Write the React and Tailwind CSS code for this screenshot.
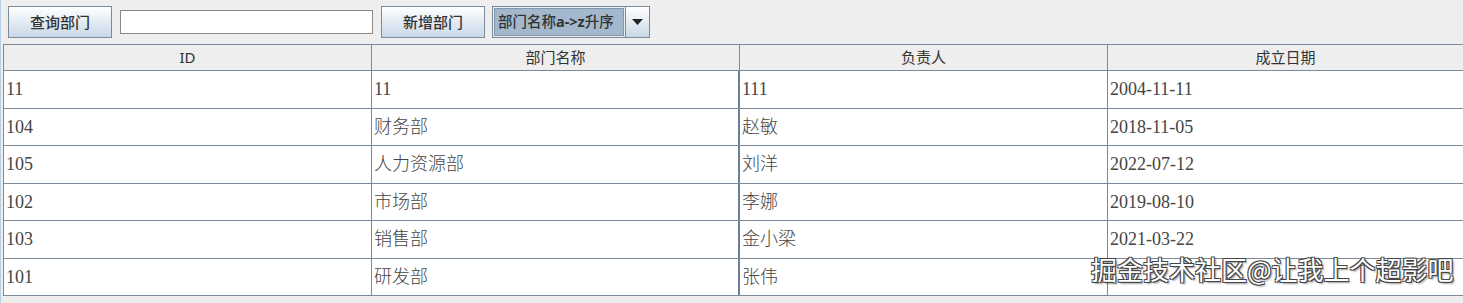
import React from "react";

const rows = [
  ["11", "11", "111", "2004-11-11"],
  ["104", "财务部", "赵敏", "2018-11-05"],
  ["105", "人力资源部", "刘洋", "2022-07-12"],
  ["102", "市场部", "李娜", "2019-08-10"],
  ["103", "销售部", "金小梁", "2021-03-22"],
  ["101", "研发部", "张伟", "2020-01-15"],
];

const heights = ["h-[38px]", "h-[37px]", "h-[38px]", "h-[37px]", "h-[38px]", "h-[37px]"];

const ui = { fontFamily: '"Noto Sans", "Noto Sans CJK SC", sans-serif' };
const cell = { fontFamily: '"Liberation Serif", "Noto Sans CJK SC", serif' };

function JButton({ children, className = "" }) {
  return (
    <button
      style={ui}
      className={`h-[32px] border border-[#7a8a99] bg-gradient-to-b from-[#ffffff] to-[#c8d8e8] text-[15px] font-medium text-[#333] ${className}`}
    >
      {children}
    </button>
  );
}

export default function App() {
  return (
    <div className="w-[1463px] h-[303px] bg-[#eeeeee] relative overflow-hidden border-l border-[#b8cfe5]">
      {/* toolbar */}
      <div className="flex items-center h-[44px] pl-[7px]">
        <JButton className="w-[104px]">查询部门</JButton>
        <input className="ml-[8px] w-[253px] h-[24px] bg-white border border-[#8a8a8a] outline-none" />
        <JButton className="ml-[8px] w-[104px]">新增部门</JButton>
        <div className="ml-[7px] w-[158px] h-[32px] flex border border-[#7a8a99] bg-[#eeeeee]">
          <div
            style={ui}
            className="m-[1px] w-[130px] bg-[#a3b8cc] border border-[#8197ad] text-[14.5px] font-medium text-[#333] flex items-center pl-[3px] whitespace-nowrap"
          >
            部门名称<span className="font-bold">a-&gt;z</span>升序
          </div>
          <div className="flex-1 border-l border-[#7a8a99] bg-gradient-to-b from-[#ffffff] to-[#c8d8e8] flex items-center justify-center">
            <svg width="11" height="6" viewBox="0 0 11 6">
              <path d="M0 0 L11 0 L5.5 6 Z" fill="#222" />
            </svg>
          </div>
        </div>
      </div>

      {/* table */}
      <div className="ml-[2px] border-l border-t border-[#7a8a99] bg-white">
        <div
          style={ui}
          className="grid grid-cols-[368px_368px_368px_1fr] h-[26px] bg-[#eeeeee] border-b border-[#7a8a99] text-[15px] text-[#333]"
        >
          {["ID", "部门名称", "负责人", "成立日期"].map((h, i) => (
            <div
              key={h}
              className={`flex items-center justify-center ${i < 3 ? "border-r border-[#7a8a99]" : ""}`}
            >
              {h}
            </div>
          ))}
        </div>
        {rows.map((r, ri) => (
          <div
            key={ri}
            style={cell}
            className={`grid grid-cols-[368px_368px_368px_1fr] ${heights[ri]} border-b border-[#7a8a99] text-[18px] font-light text-[#444]`}
          >
            {r.map((c, ci) => (
              <div
                key={ci}
                className={`flex items-center pl-[2px] ${
                  ci === 1 ? "border-r-2 border-[#6a7f96]" : ci < 3 ? "border-r border-[#7a8a99]" : ""
                }`}
              >
                {ri === 5 && ci === 3 ? "" : c}
              </div>
            ))}
          </div>
        ))}
      </div>

      {/* watermark */}
      <div
        style={{
          fontFamily: '"Noto Sans CJK SC", sans-serif',
          textShadow:
            "1px 1px 0 #444, -1px -1px 0 #444, 1px -1px 0 #444, -1px 1px 0 #444, 2px 2px 2px rgba(0,0,0,0.4)",
        }}
        className="absolute left-[1090px] top-[256px] text-[26px] text-white whitespace-nowrap leading-none"
      >
        掘金技术社区@让我上个超影吧
      </div>
    </div>
  );
}
